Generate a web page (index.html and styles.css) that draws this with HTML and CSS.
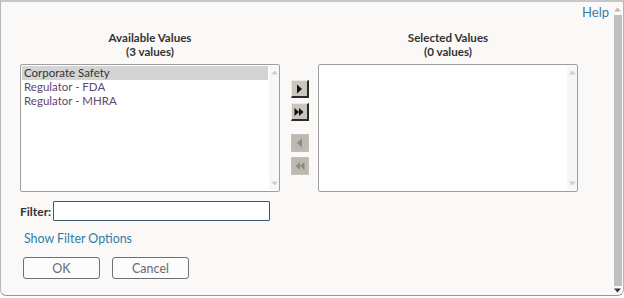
FILE: index.html
```html
<!DOCTYPE html>
<html>
<head>
<meta charset="utf-8">
<link rel="stylesheet" href="styles.css">
</head>
<body>
<div class="dialog">
  <div class="main">
    <div class="help-row"><a class="help" href="#">Help</a></div>
    <div class="shuttle">
      <div class="col">
        <div class="title">Available Values<br>(3 values)</div>
        <div class="listbox">
          <ul class="items">
            <li class="sel">Corporate Safety</li>
            <li class="opt">Regulator - FDA</li>
            <li class="opt">Regulator - MHRA</li>
          </ul>
          <div class="lscroll">
            <svg class="arr" width="7" height="5" viewBox="0 0 7 5"><path d="M0 4.5 L3.5 0.5 L7 4.5 Z" fill="#cfcfcf"/></svg>
            <svg class="arr" width="7" height="5" viewBox="0 0 7 5"><path d="M0 0.5 L3.5 4.5 L7 0.5 Z" fill="#cfcfcf"/></svg>
          </div>
        </div>
      </div>
      <div class="mid">
        <button class="mv on b1" title="Move">
          <svg width="8" height="10" viewBox="0 0 8 10"><path d="M2 0.5 L7 5 L2 9.5 Z" fill="#111"/></svg>
        </button>
        <button class="mv on b2" title="Move All">
          <svg width="10" height="10" viewBox="0 0 10 10"><path d="M0.5 1 L5 5 L0.5 9 Z M5 1 L9.5 5 L5 9 Z" fill="#111"/></svg>
        </button>
        <button class="mv off b3" title="Remove">
          <svg width="8" height="10" viewBox="0 0 8 10"><path d="M6 0.5 L1 5 L6 9.5 Z" fill="#8c8a83"/></svg>
        </button>
        <button class="mv off b4" title="Remove All">
          <svg width="10" height="10" viewBox="0 0 10 10"><path d="M9.5 1 L5 5 L9.5 9 Z M5 1 L0.5 5 L5 9 Z" fill="#8c8a83"/></svg>
        </button>
      </div>
      <div class="col">
        <div class="title">Selected Values<br>(0 values)</div>
        <div class="listbox">
          <ul class="items"></ul>
          <div class="lscroll">
            <svg class="arr" width="7" height="5" viewBox="0 0 7 5"><path d="M0 4.5 L3.5 0.5 L7 4.5 Z" fill="#cfcfcf"/></svg>
            <svg class="arr" width="7" height="5" viewBox="0 0 7 5"><path d="M0 0.5 L3.5 4.5 L7 0.5 Z" fill="#cfcfcf"/></svg>
          </div>
        </div>
      </div>
    </div>
    <div class="filter-row">
      <label class="flabel" for="flt">Filter:</label>
      <input class="finput" id="flt" type="text">
    </div>
    <a class="link" href="#">Show Filter Options</a>
    <div class="actions">
      <button class="btn">OK</button>
      <button class="btn">Cancel</button>
    </div>
  </div>
  <div class="vscroll">
    <svg width="7" height="5" viewBox="0 0 7 5"><path d="M0 4.5 L3.5 0.5 L7 4.5 Z" fill="#bdbdbd"/></svg>
    <div class="thumb"></div>
    <svg width="7" height="5" viewBox="0 0 7 5"><path d="M0 0.5 L3.5 4.5 L7 0.5 Z" fill="#333"/></svg>
  </div>
</div>
</body>
</html>
```
FILE: styles.css
```css
html, body {
  margin: 0;
  padding: 0;
  background: #ffffff;
}
body {
  width: 624px;
  height: 298px;
  overflow: hidden;
  font-family: Lato, "Noto Sans", sans-serif;
  color: #333;
}
.dialog {
  box-sizing: border-box;
  width: 624px;
  height: 296px;
  background: #faf9f7;
  border-top: 2px solid #c7c7c7;
  border-left: 1px solid #b5b5b5;
  border-right: 1px solid #b5b5b5;
  border-bottom: 1px solid #9a9a9a;
  border-radius: 0 0 6px 6px;
  display: flex;
}
.main {
  flex: 1;
  padding-left: 19px;
  padding-right: 4px;
  display: flex;
  flex-direction: column;
  align-items: flex-start;
}
.help-row {
  align-self: stretch;
  display: flex;
  justify-content: flex-end;
  margin-top: 2px;
  height: 16px;
}
.help {
  font-size: 13px;
  line-height: 16px;
  color: #3b7fa8;
  text-decoration: none;
}
.shuttle {
  display: flex;
  margin-top: 11px;
}
.col {
  width: 260px;
  display: flex;
  flex-direction: column;
}
.title {
  font-weight: 700;
  font-size: 11.6px;
  line-height: 14px;
  text-align: center;
  color: #333;
  height: 28px;
}
.listbox {
  box-sizing: border-box;
  margin-top: 5px;
  height: 128px;
  border: 1px solid #9e9e9e;
  border-radius: 2px;
  background: #fff;
  display: flex;
  padding: 1px 0 1px 1px;
}
.items {
  flex: 1;
  list-style: none;
  margin: 0;
  padding: 0;
  font-size: 11.5px;
  line-height: 14px;
}
.items li {
  padding-left: 2px;
  height: 14px;
}
.items .sel {
  background: #d4d4d4;
  color: #333;
}
.items .opt {
  color: #634672;
}
.lscroll {
  width: 10px;
  margin-left: 1px;
  background: #f7f7f7;
  display: flex;
  flex-direction: column;
  justify-content: space-between;
  align-items: center;
  padding: 4px 0 4px;
}
.arr {
  display: block;
}
.mid {
  width: 38px;
  display: flex;
  flex-direction: column;
  align-items: center;
  padding-top: 49px;
  padding-left: 1px;
  box-sizing: border-box;
}
.mv {
  box-sizing: border-box;
  width: 18px;
  height: 18px;
  padding: 0;
  margin: 0;
  display: flex;
  align-items: center;
  justify-content: center;
  border-radius: 0;
}
.mv.on {
  background: #c9c6be;
  border-top: 1px solid #ecebe8;
  border-left: 1px solid #ecebe8;
  border-right: 2px solid #2a2a2a;
  border-bottom: 2px solid #2a2a2a;
}
.mv.off {
  background: #bcb9b1;
  border: 1px solid #c4c1ba;
}
.b2 { margin-top: 5px; }
.b3 { margin-top: 13px; }
.b4 { margin-top: 5px; }
.mv svg { display: block; }
.filter-row {
  display: flex;
  align-items: center;
  margin-top: 9px;
}
.flabel {
  flex: none;
  font-weight: 700;
  font-size: 12px;
  color: #333;
}
.finput {
  box-sizing: border-box;
  width: 217px;
  height: 20px;
  margin: 0 0 0 2px;
  border: 1.5px solid #3c5a6e;
  border-radius: 1px;
  background: #fff;
  padding: 0 3px;
  font-family: Lato, sans-serif;
}
.link {
  margin-top: 10px;
  margin-left: 4px;
  font-size: 12.4px;
  line-height: 16px;
  color: #2f7ea6;
  text-decoration: none;
}
.actions {
  display: flex;
  gap: 12px;
  margin-top: 10px;
  margin-left: 3px;
}
.btn {
  box-sizing: border-box;
  width: 77px;
  height: 22px;
  margin: 0;
  border: 1px solid #6f6f6f;
  border-radius: 3px;
  background: #fcfcfc;
  color: #6a6a6a;
  font-family: Lato, sans-serif;
  font-size: 12.5px;
  padding: 0;
}
.vscroll {
  width: 9px;
  margin-right: 1px;
  display: flex;
  flex-direction: column;
  align-items: center;
  padding: 5px 0 2px;
  box-sizing: border-box;
}
.vscroll svg { display: block; flex: none; }
.thumb {
  flex: 1;
  width: 8px;
  margin: 3px 0 2px;
  background: #c0c0c0;
}
```
